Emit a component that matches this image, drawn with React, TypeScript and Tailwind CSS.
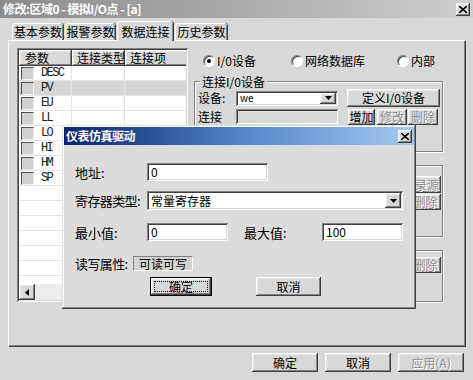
import React from "react";

const raised =
  "bg-[#d8d8d8] shadow-[inset_-1px_-1px_0_#404040,inset_1px_1px_0_#ffffff,inset_-2px_-2px_0_#808080,inset_2px_2px_0_#e8e8e8]";
const sunken =
  "bg-white shadow-[inset_1px_1px_0_#808080,inset_-1px_-1px_0_#ffffff,inset_2px_2px_0_#404040,inset_-2px_-2px_0_#d8d8d8]";
const sunkenGray =
  "bg-[#d8d8d8] shadow-[inset_1px_1px_0_#808080,inset_-1px_-1px_0_#ffffff,inset_2px_2px_0_#404040,inset_-2px_-2px_0_#d8d8d8]";
const grayText = "text-[#8c8c8c] [text-shadow:1px_1px_0_#ffffff]";

const PARAMS = ["DESC", "PV", "EU", "LL", "LO", "HI", "HM", "SP"];

function Btn({
  children,
  className = "",
  disabled = false,
}: {
  children?: React.ReactNode;
  className?: string;
  disabled?: boolean;
}) {
  return (
    <div
      className={`${raised} flex items-center justify-center whitespace-nowrap overflow-hidden ${
        disabled ? grayText : "text-black"
      } ${className}`}
    >
      {children}
    </div>
  );
}

function Radio({ checked = false }: { checked?: boolean }) {
  return (
    <span className="w-[12px] h-[12px] rounded-full bg-white border border-[#808080] border-r-white border-b-white shadow-[inset_1px_1px_0_#404040] flex items-center justify-center shrink-0">
      {checked && <span className="w-[4px] h-[4px] rounded-full bg-black" />}
    </span>
  );
}

function Group({
  label,
  className = "",
  children,
}: {
  label?: string;
  className?: string;
  children?: React.ReactNode;
}) {
  return (
    <div
      className={`relative border border-[#808080] shadow-[1px_1px_0_#ffffff,inset_1px_1px_0_#ffffff] ${className}`}
    >
      {label && (
        <span className="absolute top-[-7px] left-[5px] bg-[#d8d8d8] px-[2px] leading-[13px]">
          {label}
        </span>
      )}
      {children}
    </div>
  );
}

function Combo({ value, className = "" }: { value: string; className?: string }) {
  return (
    <div className={`${sunken} flex items-center p-[2px] ${className}`}>
      <span className="flex-1 pl-[2px] whitespace-nowrap leading-none">{value}</span>
      <div className={`${raised} w-[16px] h-full flex items-center justify-center`}>
        <svg width="7" height="4" viewBox="0 0 7 4">
          <path d="M0 0h7L3.5 4z" fill="#000" />
        </svg>
      </div>
    </div>
  );
}

function Tab({
  label,
  active = false,
  className = "",
}: {
  label: string;
  active?: boolean;
  className?: string;
}) {
  return (
    <div
      className={`flex items-center justify-center bg-[#d8d8d8] rounded-t-[3px] border-t border-l border-white shadow-[inset_-1px_0_0_#808080,1px_0_0_#404040] ${
        active ? "h-[20px] mb-[-1px] relative z-10" : "h-[17px]"
      } ${className}`}
    >
      {label}
    </div>
  );
}

function ParamList() {
  const rows = Array.from({ length: 15 }).map((_, i) => PARAMS[i] ?? "");
  return (
    <div className={`${sunken} w-[171px] h-[254px] p-[2px] flex flex-col shrink-0`}>
      <div className="flex h-[16px] shrink-0 overflow-hidden">
        <Btn className="w-[53px] shrink-0 justify-start pl-[6px]">参数</Btn>
        <Btn className="w-[53px] shrink-0 justify-start pl-[5px]">连接类型</Btn>
        <Btn className="w-[80px] shrink-0 justify-start pl-[5px]">连接项</Btn>
      </div>
      <div className="flex-1 overflow-hidden">
        {rows.map((p, i) => (
          <div
            key={i}
            className={`flex h-[15px] border-b border-[#e4e4e4] ${p === "PV" ? "bg-[#d6d6d6]" : ""}`}
          >
            <div className="w-[53px] flex items-center border-r border-[#e4e4e4] shrink-0">
              {p && (
                <>
                  <span className="ml-[2px] w-[13px] h-[13px] bg-[#d0d0d0] border border-[#505050] border-r-[#f0f0f0] border-b-[#f0f0f0] shrink-0" />
                  <span className="ml-[7px] font-['Liberation_Mono',monospace] text-[12px] tracking-[-1.6px] text-[#202020]">
                    {p}
                  </span>
                </>
              )}
            </div>
            <div className="w-[53px] border-r border-[#e4e4e4] shrink-0" />
            <div className="flex-1" />
          </div>
        ))}
      </div>
      <div className="h-[16px] flex shrink-0 bg-[#ececec]">
        <Btn className="w-[16px] h-[16px]">
          <svg width="4" height="7" viewBox="0 0 4 7">
            <path d="M4 0v7L0 3.5z" fill="#000" />
          </svg>
        </Btn>
      </div>
    </div>
  );
}

function RightSide() {
  return (
    <div className="ml-[6px] w-[249px] flex flex-col pt-[6px]">
      <div className="h-[14px] flex items-center">
        <div className="ml-[9px] w-[88px] flex items-center gap-[2px]">
          <Radio checked />
          <span>I/0设备</span>
        </div>
        <div className="w-[106px] flex items-center gap-[2px]">
          <Radio />
          <span>网络数据库</span>
        </div>
        <div className="flex items-center gap-[2px]">
          <Radio />
          <span>内部</span>
        </div>
      </div>

      <Group label="连接I/0设备" className="mt-[13px] h-[71px]">
        <div className="flex items-center mt-[7px] h-[18px]">
          <span className="ml-[3px] w-[38px]">设备:</span>
          <Combo value="we" className="w-[102px] h-[15px] text-[10px]" />
          <Btn className="ml-[9px] w-[93px] h-[18px]">定义I/0设备</Btn>
        </div>
        <div className="flex items-center mt-[1px] h-[17px]">
          <span className="ml-[3px] w-[38px]">连接</span>
          <div className={`${sunkenGray} w-[102px] h-[15px]`} />
          <Btn className="ml-[10px] w-[27px] h-[16px]">增加</Btn>
          <Btn disabled className="ml-[2px] w-[30px] h-[16px]">
            修改
          </Btn>
          <Btn disabled className="ml-[1px] w-[30px] h-[16px]">
            删除
          </Btn>
        </div>
      </Group>

      <Group className="mt-[13px] h-[72px]">
        <div className="flex flex-col items-end pr-[1px] mt-[10px]">
          <Btn disabled className="w-[62px] h-[17px] justify-end pr-[2px]">
            选择记录源
          </Btn>
          <Btn disabled className="w-[31px] h-[16px] mt-[1px]">
            删除
          </Btn>
        </div>
      </Group>

      <Group className="mt-[13px] h-[52px]">
        <div className="flex flex-col items-end pr-[1px] mt-[6px]">
          <Btn disabled className="w-[31px] h-[16px]">
            删除
          </Btn>
        </div>
      </Group>
    </div>
  );
}

function Dialog() {
  return (
    <div className="absolute left-[62px] top-[125px] w-[354px] h-[184px] bg-[#dcdcdc] p-[2px] flex flex-col shadow-[inset_-1px_-1px_0_#404040,inset_1px_1px_0_#e0e0e0,inset_-2px_-2px_0_#808080,inset_2px_2px_0_#ffffff]">
      <div className="h-[18px] shrink-0 flex items-center justify-between pl-[2px] pr-[2px] bg-linear-to-r from-[#0a246a] via-[#5284c8] to-[#a6caf0]">
        <span className="text-white font-bold text-[12px] tracking-[-0.5px]">仪表仿真驱动</span>
        <Btn className="w-[14px] h-[13px]">
          <svg width="8" height="7" viewBox="0 0 8 7">
            <path d="M0 0l8 7M8 0L0 7" stroke="#000" strokeWidth="1.6" />
          </svg>
        </Btn>
      </div>
      <div className="flex flex-col pl-[11px] text-[13px]">
        <div className="flex items-center h-[18px] mt-[18px]">
          <span className="w-[72px] shrink-0">地址:</span>
          <div className={`${sunken} w-[121px] h-full flex items-center pl-[4px] text-[12px]`}>0</div>
        </div>
        <div className="flex items-center h-[19px] mt-[10px]">
          <span className="w-[72px] shrink-0 whitespace-nowrap tracking-[-0.6px]">寄存器类型:</span>
          <Combo value="常量寄存器" className="w-[256px] h-full text-[12px]" />
        </div>
        <div className="flex items-center h-[18px] mt-[13px]">
          <span className="w-[72px] shrink-0">最小值:</span>
          <div className={`${sunken} w-[81px] h-full flex items-center pl-[4px] text-[12px]`}>0</div>
          <span className="ml-[16px] w-[78px] shrink-0">最大值:</span>
          <div className={`${sunken} w-[81px] h-full flex items-center pl-[4px] text-[12px]`}>100</div>
        </div>
        <div className="flex items-center h-[15px] mt-[15px]">
          <span className="w-[58px] shrink-0 whitespace-nowrap tracking-[-0.6px]">读写属性:</span>
          <div className="w-[60px] h-full flex items-center justify-center bg-[#d4d4d4] border border-[#808080] border-r-white border-b-white text-[12px]">
            可读可写
          </div>
        </div>
        <div className="flex h-[19px] mt-[6px] text-[12px]">
          <div className="ml-[75px] w-[62px] h-full border border-black">
            <div className={`${raised} w-full h-full p-[3px]`}>
              <div className="w-full h-full border border-dotted border-black flex items-center justify-center">
                确定
              </div>
            </div>
          </div>
          <Btn className="ml-[44px] w-[65px] h-full">取消</Btn>
        </div>
      </div>
    </div>
  );
}

export default function App() {
  return (
    <div className="relative w-[473px] h-[380px] overflow-hidden bg-[#d8d8d8] text-[12px] leading-none text-black font-['Noto_Sans_CJK_SC','Noto_Sans',sans-serif] select-none">
      <div className="h-[18px] flex items-center justify-between pl-[3px] pr-[3px] bg-linear-to-r from-[#8c8c8c] via-[#aaaaaa] to-[#cfcfcf]">
        <span className="text-white font-bold text-[12px] tracking-[-0.5px]">修改:区域0 - 模拟I/O点 - [a]</span>
        <Btn className="w-[14px] h-[13px]">
          <svg width="8" height="7" viewBox="0 0 8 7">
            <path d="M0 0l8 7M8 0L0 7" stroke="#000" strokeWidth="1.6" />
          </svg>
        </Btn>
      </div>

      <div className="h-[22px] flex items-end">
        <Tab label="基本参数" className="ml-[12px] w-[51px]" />
        <Tab label="报警参数" className="ml-[2px] w-[50px]" />
        <Tab label="数据连接" active className="ml-[2px] w-[56px]" />
        <Tab label="历史参数" className="ml-[2px] w-[52px]" />
      </div>

      <div className="mx-[8px] h-[306px] border-t border-l border-white shadow-[inset_-1px_-1px_0_#808080,1px_1px_0_#404040] flex pl-[8px] pt-[7px]">
        <ParamList />
        <RightSide />
      </div>

      <div className="flex justify-end pr-[9px] mt-[7px]">
        <Btn className="w-[66px] h-[19px]">确定</Btn>
        <Btn className="ml-[7px] w-[66px] h-[19px]">取消</Btn>
        <Btn disabled className="ml-[7px] w-[66px] h-[19px]">
          应用(A)
        </Btn>
      </div>

      <Dialog />
    </div>
  );
}
